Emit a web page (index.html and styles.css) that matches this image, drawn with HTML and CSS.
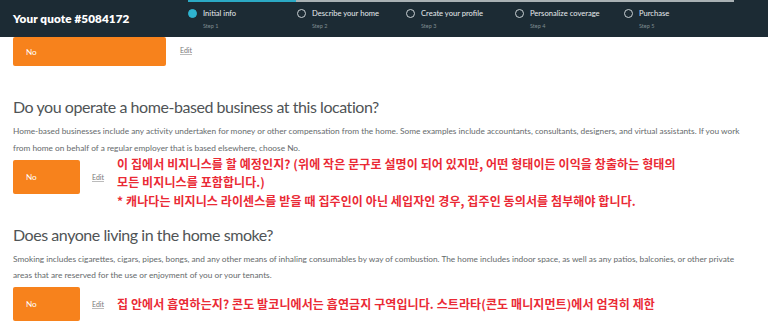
FILE: index.html
```html
<!DOCTYPE html>
<html>
<head>
<meta charset="utf-8">
<link rel="stylesheet" href="styles.css">
</head>
<body>
<header class="header">
  <div class="title">Your quote #5084172</div>
  <div class="stepper">
    <div class="track"><div class="track-fill"></div></div>
    <div class="steps">
      <div class="step active"><span class="dot"></span><div class="step-text"><div class="step-label">Initial info</div><div class="step-num">Step 1</div></div></div>
      <div class="step"><span class="dot"></span><div class="step-text"><div class="step-label">Describe your home</div><div class="step-num">Step 2</div></div></div>
      <div class="step"><span class="dot"></span><div class="step-text"><div class="step-label">Create your profile</div><div class="step-num">Step 3</div></div></div>
      <div class="step"><span class="dot"></span><div class="step-text"><div class="step-label">Personalize coverage</div><div class="step-num">Step 4</div></div></div>
      <div class="step"><span class="dot"></span><div class="step-text"><div class="step-label">Purchase</div><div class="step-num">Step 5</div></div></div>
    </div>
  </div>
</header>
<main class="content">
  <div class="answer-row first">
    <div class="answer wide">No</div>
    <a class="edit">Edit</a>
  </div>

  <section class="question">
    <h2 class="q-title">Do you operate a home-based business at this location?</h2>
    <p class="q-desc">Home-based businesses include any activity undertaken for money or other compensation from the home. Some examples include accountants, consultants, designers, and virtual assistants. If you work from home on behalf of a regular employer that is based elsewhere, choose No.</p>
    <div class="answer-row">
      <div class="answer">No</div>
      <a class="edit">Edit</a>
      <div class="note">이 집에서 비지니스를 할 예정인지? (위에 작은 문구로 설명이 되어 있지만, 어떤 형태이든 이익을 창출하는 형태의<br>모든 비지니스를 포함합니다.)<br>* 캐나다는 비지니스 라이센스를 받을 때 집주인이 아닌 세입자인 경우, 집주인 동의서를 첨부해야 합니다.</div>
    </div>
  </section>

  <section class="question">
    <h2 class="q-title">Does anyone living in the home smoke?</h2>
    <p class="q-desc">Smoking includes cigarettes, cigars, pipes, bongs, and any other means of inhaling consumables by way of combustion. The home includes indoor space, as well as any patios, balconies, or other private areas that are reserved for the use or enjoyment of you or your tenants.</p>
    <div class="answer-row">
      <div class="answer">No</div>
      <a class="edit">Edit</a>
      <div class="note single">집 안에서 흡연하는지? 콘도 발코니에서는 흡연금지 구역입니다. 스트라타(콘도 매니지먼트)에서 엄격히 제한</div>
    </div>
  </section>
</main>
</body>
</html>
```

FILE: styles.css
```css
* { box-sizing: border-box; }
html, body { margin: 0; padding: 0; background: #fff; }
body {
  font-family: Lato, "Open Sans", "Liberation Sans", sans-serif;
  width: 768px;
  height: 334px;
  overflow: hidden;
}
.header {
  height: 37px;
  background: #1c2b34;
  display: flex;
}
.title {
  width: 188px;
  padding-left: 13px;
  color: #fff;
  font-weight: 800;
  font-size: 11.7px;
  line-height: 36px;
  letter-spacing: 0.1px;
}
.stepper {
  width: 546px;
  display: flex;
  flex-direction: column;
}
.track {
  height: 2px;
  background: #a9b1b4;
}
.track-fill {
  width: 108px;
  height: 2px;
  background: #2ba9c4;
}
.steps {
  display: flex;
  padding-top: 6px;
}
.step {
  width: 109px;
  display: flex;
  gap: 6px;
}
.dot {
  width: 9px;
  height: 9px;
  border-radius: 50%;
  border: 1.2px solid #c9d0d3;
  margin-top: 1px;
  flex: none;
}
.step.active .dot {
  background: #2fb4d0;
  border-color: #2fb4d0;
}
.step-label {
  color: #e6eaec;
  font-size: 7.6px;
  line-height: 10px;
}
.step-num {
  color: #7f8b91;
  font-size: 5.5px;
  line-height: 8px;
  margin-top: 4px;
}
.content {
  padding: 0 13px;
}
.answer-row {
  display: flex;
  align-items: flex-start;
}
.answer {
  width: 67px;
  height: 34px;
  background: #f7821c;
  color: #fff;
  font-size: 8.2px;
  padding-left: 13px;
  display: flex;
  align-items: center;
  border-radius: 2px;
  flex: none;
}
.answer.wide {
  width: 153px;
  height: 29px;
}
.edit {
  color: #777;
  font-size: 7px;
  line-height: 10px;
  text-decoration: underline;
  text-decoration-color: #bbb;
  margin-left: 12px;
  margin-top: 12px;
  flex: none;
}
.first .edit { margin-left: 14px; margin-top: 8px; }
.question { margin-top: 31px; }
.q-title {
  margin: 0;
  font-size: 16px;
  font-weight: 400;
  color: #505456;
  line-height: 20px;
  letter-spacing: -0.45px;
}
.q-desc {
  margin: 6px 0 3px;
  font-size: 8.3px;
  line-height: 16.8px;
  color: #666a6c;
  width: 735px;
}
.note {
  margin-left: 13px;
  color: #ea2a35;
  font-family: "Noto Sans CJK KR", sans-serif;
  font-weight: 700;
  font-size: 12px;
  line-height: 18.5px;
  letter-spacing: 0.1px;
  margin-top: -5px;
  margin-bottom: -16.5px;
}
.note.single { align-self: center; margin-top: 0; margin-bottom: 0; }
```
